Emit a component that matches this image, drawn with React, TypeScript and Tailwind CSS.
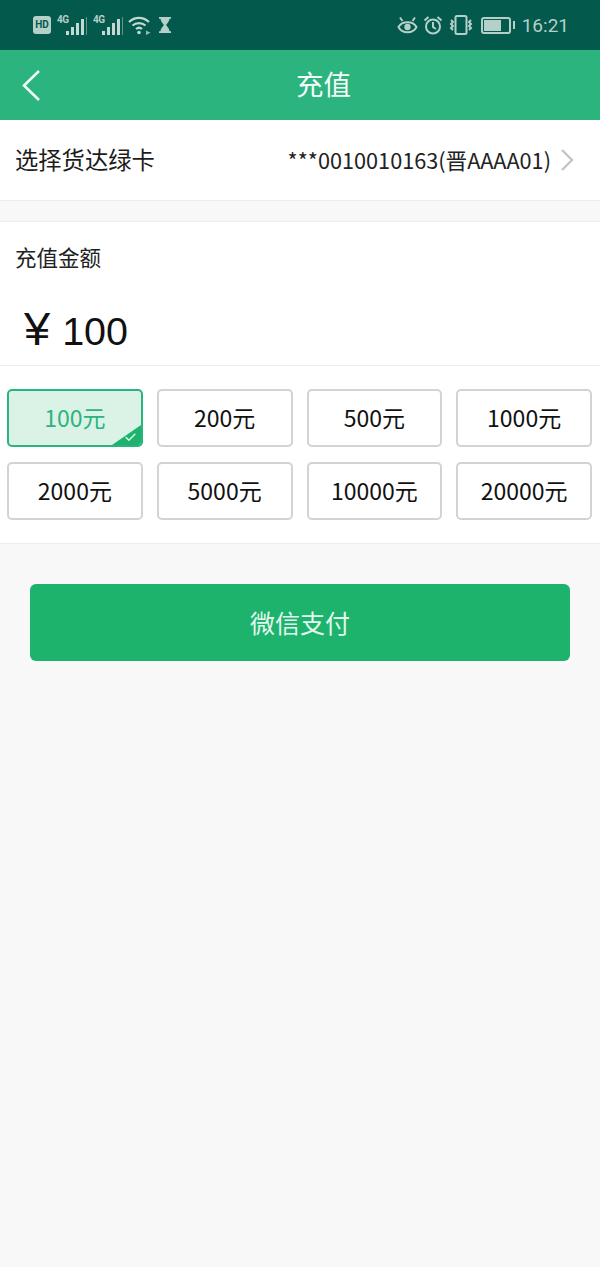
import { Check } from 'lucide-react'

const font = { fontFamily: '"Noto Sans CJK SC", "Noto Sans", sans-serif' }

const amounts = ['100元', '200元', '500元', '1000元', '2000元', '5000元', '10000元', '20000元']

function Signal({ className }: { className?: string }) {
  return (
    <div className={`relative h-[20px] w-[30px] ${className}`}>
      <span className="absolute left-0 top-0 text-[10px] font-bold leading-[10px] tracking-[-0.5px] text-[#b5cfc9]" style={{ fontFamily: 'Roboto, sans-serif' }}>4G</span>
      <div className="absolute bottom-0 right-0 flex items-end gap-[2px]">
        <span className="h-[4px] w-[3px] bg-[#c3d9d3]" />
        <span className="h-[8px] w-[3px] bg-[#c3d9d3]" />
        <span className="h-[12px] w-[3px] bg-[#c3d9d3]" />
        <span className="h-[16px] w-[3px] bg-[#c3d9d3]" />
        <span className="h-[18px] w-[1px] bg-[#5f958a]" />
      </div>
    </div>
  )
}

function StatusLeft() {
  return (
    <div className="flex items-center">
      <span className="flex h-[18px] w-[18px] items-center justify-center rounded-[3px] bg-[#b5cfc9] text-[10px] font-bold leading-none text-[#03594c]" style={{ fontFamily: 'Roboto, sans-serif' }}>HD</span>
      <Signal className="ml-[6px]" />
      <Signal className="ml-[6px]" />
      <svg className="ml-[5px]" width="24" height="20" viewBox="0 0 24 20" fill="none" stroke="#c3d9d3" strokeWidth="2.200">
        <path d="M1 7c5.800-5.500 14-5.500 20 0" />
        <path d="M4.500 10.500c3.800-3.300 9.200-3.300 13 0" />
        <path d="M8 14c2-1.600 4.200-1.600 6 0" />
        <circle cx="11" cy="17.500" r="1.800" fill="#c3d9d3" stroke="none" />
        <path d="M18 15.500l4.500 2.200-4.500 2.200z" fill="#94bab1" stroke="none" />
      </svg>
      <svg className="ml-[7px]" width="12" height="16" viewBox="0 0 12 16" fill="#b5cfc9">
        <path d="M0 0h12v1.800H10.500c0 2.700-2.400 4.500-3.400 6.200 1 1.700 3.400 3.500 3.400 6.200H12V16H0v-1.800h1.500c0-2.700 2.400-4.500 3.400-6.200-1-1.700-3.400-3.500-3.400-6.200H0z" />
      </svg>
    </div>
  )
}

function StatusRight() {
  return (
    <div className="flex items-center">
      <svg width="21" height="19" viewBox="0 0 21 19" fill="none" stroke="#b5cfc9" strokeWidth="2">
        <path d="M1.500 11c3.500-6.500 14.500-6.500 18 0-3.500 7-14.500 7-18 0z" />
        <circle cx="10.500" cy="11" r="3.200" fill="#b5cfc9" stroke="none" />
        <path d="M3 1.500l2.500 3.500M18 1.500l-2.500 3.500" />
      </svg>
      <svg className="ml-[5px]" width="20" height="19" viewBox="0 0 20 19" fill="none" stroke="#b5cfc9" strokeWidth="2">
        <circle cx="10" cy="10.500" r="7" />
        <path d="M10 6v5l3 2M1.500 4.500l4-3.500M18.500 4.500l-4-3.500" />
      </svg>
      <svg className="ml-[6px]" width="24" height="20" viewBox="0 0 24 20" fill="none" stroke="#b5cfc9" strokeWidth="2">
        <rect x="6.500" y="1" width="11" height="18" rx="1.500" />
        <path d="M2 5l2 2-2 2 2 2-2 2 2 2M22 5l-2 2 2 2-2 2 2 2-2 2" />
      </svg>
      <div className="ml-[8px] flex items-center">
        <div className="flex h-[17px] w-[30px] items-center rounded-[3px] border-2 border-[#b5cfc9] p-[1px]">
          <div className="h-full w-[17px] bg-[#b5cfc9]" />
        </div>
        <span className="ml-[2px] h-[8px] w-[2px] bg-[#b5cfc9]" />
      </div>
      <span className="ml-[7px] text-[19px] leading-none text-[#b5cfc9]" style={{ fontFamily: 'Roboto, sans-serif' }}>16:21</span>
    </div>
  )
}

export default function App() {
  return (
    <div className="flex min-h-[1267px] w-[600px] flex-col bg-[#f8f8f8]" style={font}>
      <div className="flex h-[50px] items-center justify-between bg-[#03594c] pl-[33px] pr-[31px]">
        <StatusLeft />
        <StatusRight />
      </div>

      <div className="relative flex h-[70px] items-center justify-center bg-[#2cb47f] pb-[2px] pl-[47px]">
        <svg className="absolute left-[21px] top-[19px]" width="20" height="33" viewBox="0 0 20 33" fill="none" stroke="#f1fbf7" strokeWidth="2.600">
          <path d="M18 2L3 16.500 18 31" />
        </svg>
        <span className="text-[27.500px] leading-none text-[#f4fbf8]">充值</span>
      </div>

      <div className="flex h-[81px] items-center justify-between border-b border-[#ececec] bg-white pl-[15px] pr-[25px]">
        <span className="text-[23.300px] leading-none text-[#1c1c1c]">选择货达绿卡</span>
        <div className="flex items-center">
          <span className="text-[21.700px] leading-none text-[#222]">***0010010163(晋AAAA01)</span>
          <svg className="ml-[9px]" width="15" height="24" viewBox="0 0 15 24" fill="none" stroke="#c4c4c4" strokeWidth="2.400">
            <path d="M2 2l10 10L2 22" />
          </svg>
        </div>
      </div>

      <div className="mt-[20px] border-y border-[#ececec] bg-white">
        <div className="flex h-[144px] flex-col border-b border-[#ececec] px-[15px]">
          <span className="mt-[24px] text-[21.500px] leading-none text-[#222]">充值金额</span>
          <div className="ml-[9px] mt-[37px] flex items-baseline leading-none text-[#111]" style={{ fontFamily: '"Liberation Sans", sans-serif' }}>
            <span className="text-[47px] leading-none">¥</span>
            <span className="ml-[12px] text-[39.500px] leading-none">100</span>
          </div>
        </div>

        <div className="grid grid-cols-4 gap-x-[14px] gap-y-[15px] pb-[23px] pl-[7px] pr-[8px] pt-[23px]">
          {amounts.map((a, i) => (
            <div
              key={a}
              className={
                i === 0
                  ? 'relative flex h-[58px] items-center justify-center overflow-hidden rounded-[5px] border-2 border-[#2cb47f] bg-[#dbf2e6] pb-[2px] text-[23px] leading-none text-[#2cb47f]'
                  : 'flex h-[58px] items-center justify-center rounded-[5px] border-2 border-[#d3d3d3] bg-white pb-[2px] text-[23px] leading-none text-[#111]'
              }
            >
              {a}
              {i === 0 && (
                <>
                  <span className="absolute bottom-0 right-0 h-0 w-0 border-b-[20px] border-l-[29px] border-b-[#1db36d] border-l-transparent" />
                  <Check className="absolute bottom-[1px] right-[4px] text-[#dbf2e6]" size={13} strokeWidth={3} />
                </>
              )}
            </div>
          ))}
        </div>
      </div>

      <div className="mx-[30px] mt-[40px] flex h-[77px] items-center justify-center rounded-[6px] bg-[#1db36d] text-[25px] leading-none text-[#e4f7ee]">
        微信支付
      </div>
    </div>
  )
}
